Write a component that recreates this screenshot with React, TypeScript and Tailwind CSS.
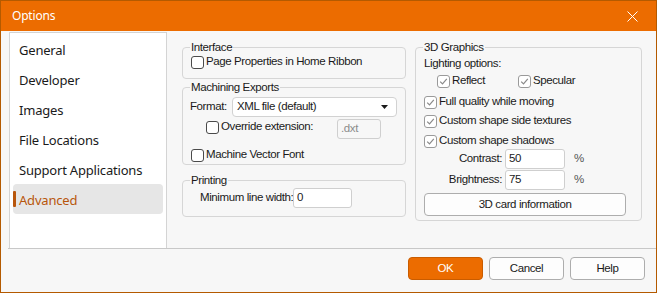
import React from "react";

type BoxProps = { checked?: boolean; label: string; className?: string };

function CheckBox({ checked = false, label, className = "" }: BoxProps) {
  return (
    <label className={`flex h-[14px] items-center gap-[2px] ${className}`}>
      <span
        className={`flex h-[13px] w-[13px] shrink-0 items-center justify-center rounded-[3px] border bg-white ${
          checked ? "border-[#9a9a9a]" : "border-[#4a4a4a]"
        }`}
      >
        {checked && (
          <svg width="9" height="9" viewBox="0 0 9 9">
            <path d="M1.2 4.6 L3.5 6.9 L7.8 1.8" fill="none" stroke="#8a8a8a" strokeWidth="1.2" />
          </svg>
        )}
      </span>
      <span className="whitespace-nowrap">{label}</span>
    </label>
  );
}

// legend sits at the fieldset's left edge; padding goes on the inner box
function Group({
  title,
  className,
  bodyClass,
  children,
}: {
  title: string;
  className: string;
  bodyClass: string;
  children: React.ReactNode;
}) {
  return (
    <fieldset className={`rounded-[4px] border border-[#d6d6d6] ${className}`}>
      <legend className="ml-[7px] px-[1px] leading-[14px]">{title}</legend>
      <div className={bodyClass}>{children}</div>
    </fieldset>
  );
}

function Field({ value, className, disabled = false }: { value: string; className: string; disabled?: boolean }) {
  return (
    <div
      className={`flex h-[20px] items-center rounded-[3px] border border-[#cfcfcf] pl-[3px] ${
        disabled ? "bg-[#f7f7f7] text-[#8c8c8c]" : "bg-white"
      } ${className}`}
    >
      {value}
    </div>
  );
}

const navItems = ["General", "Developer", "Images", "File Locations", "Support Applications", "Advanced"];

export default function App() {
  return (
    <div
      className="flex h-[293px] w-[657px] flex-col overflow-hidden border border-[#b45a00] bg-[#f7f7f7] text-[11.5px] tracking-[-0.4px] text-[#1a1a1a]"
      style={{ fontFamily: '"Liberation Sans", Arial, sans-serif' }}
    >
      <div className="flex h-[30px] shrink-0 items-center justify-between bg-[#ec6c00] pl-[11px] pr-[18px]">
        <span className="text-[12px] tracking-[-0.2px] text-white" style={{ fontFamily: '"Noto Sans", sans-serif' }}>
          Options
        </span>
        <svg width="11" height="11" viewBox="0 0 11 11">
          <path d="M0.5 0.5 L10.5 10.5 M10.5 0.5 L0.5 10.5" stroke="#fff" strokeWidth="1" />
        </svg>
      </div>

      <div className="flex h-[217px] shrink-0">
        <nav
          className="ml-[8px] mt-[1px] w-[158px] border-l border-r border-t border-[#d4d4d4] bg-white pt-[1px] text-[13px] tracking-[-0.2px]"
          style={{ fontFamily: '"Noto Sans", sans-serif' }}
        >
          {navItems.map((item) => {
            const active = item === "Advanced";
            return (
              <div
                key={item}
                className={`relative mx-[3px] flex h-[30px] items-center rounded-[4px] pl-[6px] pt-[3px] ${
                  active ? "bg-[#e6e6e6] text-[#b8560c]" : "text-[#1a1a1a]"
                }`}
              >
                {active && <span className="absolute left-0 top-[7px] h-[16px] w-[3px] rounded-[1px] bg-[#b8560c]" />}
                {item}
              </div>
            );
          })}
        </nav>

        <div className="ml-[15px] mt-[9px] flex gap-[9px]">
          <div className="flex w-[224px] flex-col">
            <Group title="Interface" className="h-[39px]" bodyClass="pl-[8px] pt-[1px]">
              <CheckBox label="Page Properties in Home Ribbon" />
            </Group>

            <Group title="Machining Exports" className="mt-[1px] h-[85px]" bodyClass="pl-[7px] pr-[8px] pt-[3px]">
              <div className="flex h-[20px] items-center">
                <span className="w-[42px]">Format:</span>
                <div className="flex h-[20px] flex-1 items-center justify-between rounded-[4px] border border-[#d2d2d2] bg-white pl-[4px] pr-[8px]">
                  <span>XML file (default)</span>
                  <svg width="7" height="4" viewBox="0 0 7 4">
                    <path d="M0 0 H7 L3.5 4 Z" fill="#1a1a1a" />
                  </svg>
                </div>
              </div>
              <div className="flex h-[19px] items-start pl-[16px] pt-[3px]">
                <CheckBox label="Override extension:" className="w-[131px]" />
                <Field value=".dxt" disabled className="mt-[-1px] w-[44px]" />
              </div>
              <CheckBox label="Machine Vector Font" className="ml-[1px] mt-[12px]" />
            </Group>

            <Group title="Printing" className="mt-[8px] h-[44px]" bodyClass="pl-[17px] pt-[1px]">
              <div className="flex items-center">
                <span className="w-[93px] whitespace-nowrap">Minimum line width:</span>
                <Field value="0" className="w-[59px]" />
              </div>
            </Group>
          </div>

          <Group title="3D Graphics" className="h-[181px] w-[225px]" bodyClass="flex flex-col pl-[8px] pr-[15px]">
            <div className="flex h-[18px] items-center pt-[1px]">Lighting options:</div>
            <div className="flex h-[18px] items-center pl-[13px]">
              <CheckBox checked label="Reflect" className="w-[81px]" />
              <CheckBox checked label="Specular" />
            </div>
            <CheckBox checked label="Full quality while moving" className="mt-[5px]" />
            <CheckBox checked label="Custom shape side textures" className="mt-[5px]" />
            <CheckBox checked label="Custom shape shadows" className="mt-[6px]" />
            <div className="mt-[1px] flex items-center">
              <span className="w-[78px] text-right">Contrast:</span>
              <Field value="50" className="ml-[3px] w-[60px]" />
              <span className="ml-[9px] text-[#555]">%</span>
            </div>
            <div className="mt-[1px] flex items-center">
              <span className="w-[78px] text-right">Brightness:</span>
              <Field value="75" className="ml-[3px] w-[60px]" />
              <span className="ml-[9px] text-[#555]">%</span>
            </div>
            <button className="mt-[3px] h-[23px] w-[202px] rounded-[4px] border border-[#adadad] bg-[#fdfdfd]">
              3D card information
            </button>
          </Group>
        </div>
      </div>

      <div className="ml-[7px] h-px shrink-0 bg-[#c8c8c8]" />

      <div className="flex flex-1 items-start justify-end gap-[6px] pr-[11px] pt-[8px]">
        <button className="h-[23px] w-[75px] rounded-[4px] border border-[#c95c00] bg-[#ec6c00] text-white">OK</button>
        <button className="h-[23px] w-[75px] rounded-[4px] border border-[#adadad] bg-[#fdfdfd]">Cancel</button>
        <button className="h-[23px] w-[75px] rounded-[4px] border border-[#adadad] bg-[#fdfdfd]">Help</button>
      </div>
    </div>
  );
}
